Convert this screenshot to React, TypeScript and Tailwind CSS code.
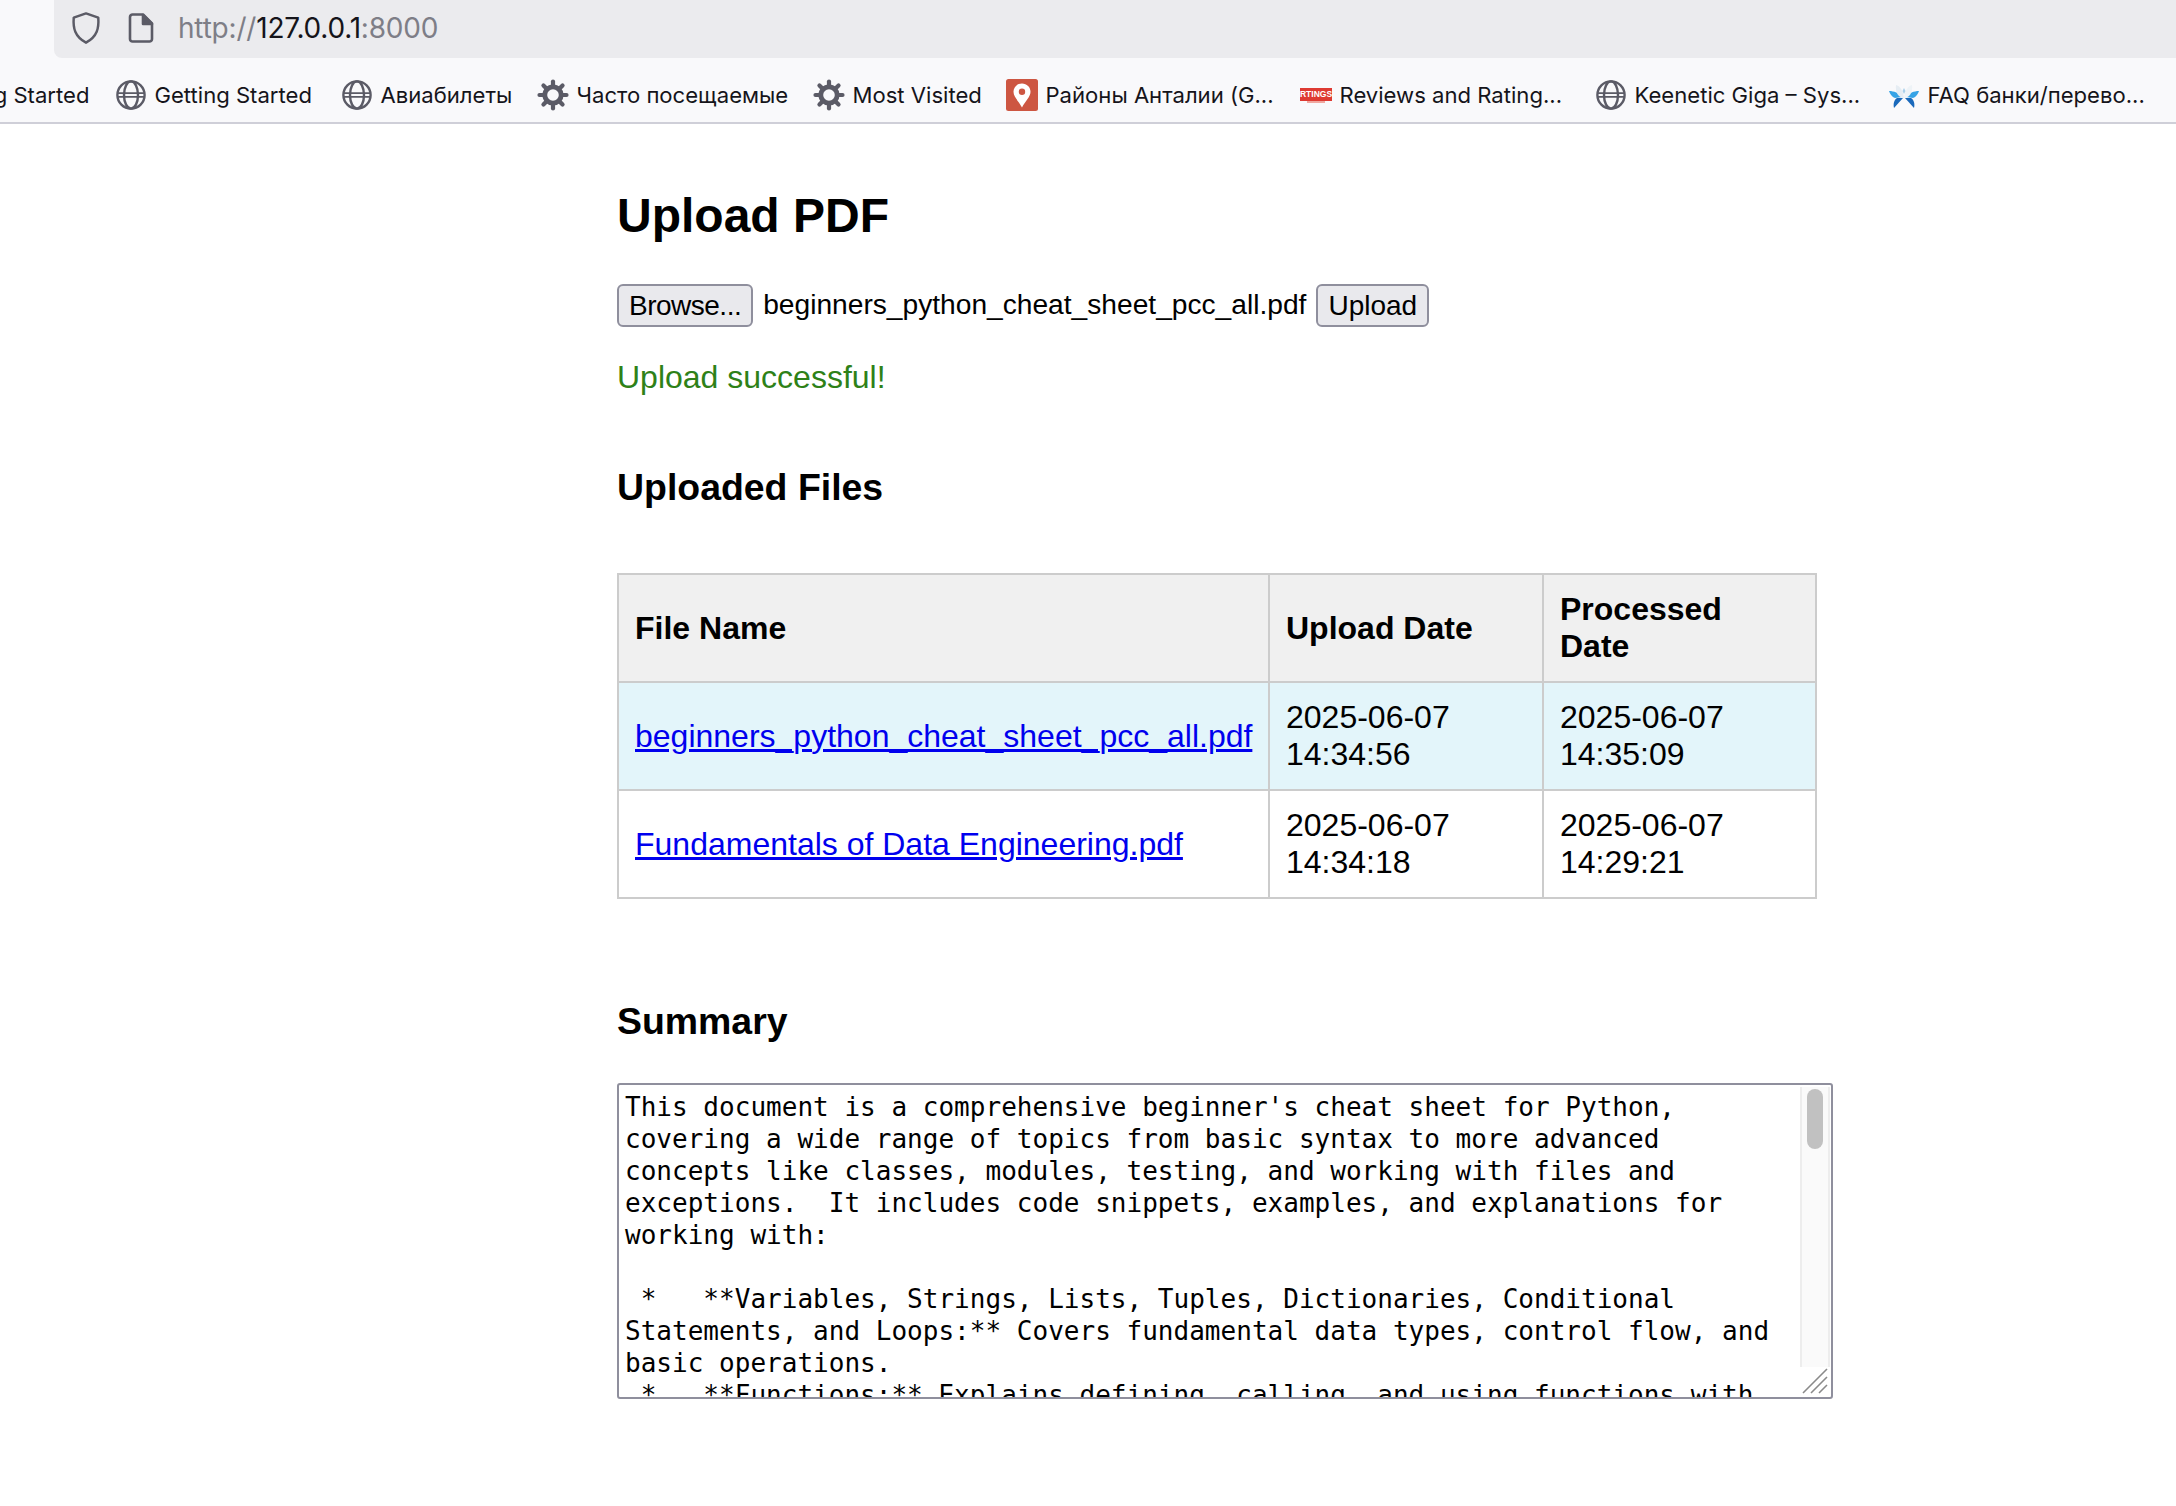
const summaryLines = [
  "This document is a comprehensive beginner's cheat sheet for Python,",
  'covering a wide range of topics from basic syntax to more advanced',
  'concepts like classes, modules, testing, and working with files and',
  'exceptions.  It includes code snippets, examples, and explanations for',
  'working with:',
  ' ',
  ' *   **Variables, Strings, Lists, Tuples, Dictionaries, Conditional',
  'Statements, and Loops:** Covers fundamental data types, control flow, and',
  'basic operations.',
  ' *   **Functions:** Explains defining, calling, and using functions with',
];

const files = [
  {
    name: 'beginners_python_cheat_sheet_pcc_all.pdf',
    uploaded: ['2025-06-07', '14:34:56'],
    processed: ['2025-06-07', '14:35:09'],
    active: true,
  },
  {
    name: 'Fundamentals of Data Engineering.pdf',
    uploaded: ['2025-06-07', '14:34:18'],
    processed: ['2025-06-07', '14:29:21'],
    active: false,
  },
];

function GlobeIcon() {
  return (
    <svg viewBox="0 0 32 32" className="h-[32px] w-[32px] shrink-0" fill="none" stroke="#5b5b66" strokeWidth="2.4">
      <circle cx="16" cy="16" r="13.6" />
      <ellipse cx="16" cy="16" rx="7" ry="13.6" />
      <path d="M3 14.200h26M3 17.800h26" strokeWidth="1.8" />
    </svg>
  );
}

function GearIcon() {
  const teeth = [0, 45, 90, 135, 180, 225, 270, 315];
  return (
    <svg viewBox="0 0 32 32" className="h-[32px] w-[32px] shrink-0" fill="none" stroke="#5b5b66">
      <circle cx="16" cy="16" r="8.2" strokeWidth="4.8" />
      {teeth.map((deg) => (
        <path key={deg} d="M16 2.500v5" strokeWidth="4.2" strokeLinecap="round" transform={`rotate(${deg} 16 16)`} />
      ))}
    </svg>
  );
}

function MapIcon() {
  return (
    <svg viewBox="0 0 32 32" className="h-[32px] w-[32px] shrink-0">
      <rect width="32" height="32" rx="2.500" fill="#cd5642" />
      <path d="M16 4.500c-4.800 0-8.500 3.600-8.500 8.300 0 5.200 5.500 9.700 8.500 15.700 3-6 8.500-10.500 8.500-15.700 0-4.700-3.700-8.300-8.500-8.300z" fill="#fff" />
      <circle cx="16" cy="12.800" r="3.200" fill="#cd5642" />
    </svg>
  );
}

function RtingsIcon() {
  return (
    <div className="flex h-[32px] w-[32px] shrink-0 flex-col items-center justify-center">
      <div className="flex h-[13px] w-[32px] items-center justify-center bg-[#de3a32] font-['Liberation_Sans',sans-serif] text-[8.5px] leading-none font-bold text-white">
        RTINGS
      </div>
      <div className="h-[2px] w-[18px] bg-[#f0a8a0]" />
    </div>
  );
}

function FaqIcon() {
  return (
    <svg viewBox="0 0 32 32" className="h-[32px] w-[32px] shrink-0">
      <path d="M1 12c5 0 10 2 13 6l-7 1c-3-1-5-4-6-7z" fill="#36a3e6" />
      <path d="M31 12c-5 0-10 2-13 6l7 1c3-1 5-4 6-7z" fill="#36a3e6" />
      <path d="M15 19c-3 3-6 7-9 10-1-4 0-8 3-10z" fill="#1a69bb" />
      <path d="M17 19c3 3 6 7 9 10 1-4 0-8-3-10z" fill="#1a69bb" />
      <path d="M8 6c4 1 7 5 8 13-5 0-9-5-8-13z" fill="#e6edf3" />
      <path d="M24 6c-4 1-7 5-8 13 5 0 9-5 8-13z" fill="#eef3f7" />
      <path d="M16 9l-1.500 3 1.500 3 1.500-3z" fill="#a9cfea" />
    </svg>
  );
}

const bookmarks = [
  { label: 'Getting Started', icon: <GlobeIcon />, width: 'w-[226px]' },
  { label: 'Авиабилеты', icon: <GlobeIcon />, width: 'w-[196px]' },
  { label: 'Часто посещаемые', icon: <GearIcon />, width: 'w-[276px]' },
  { label: 'Most Visited', icon: <GearIcon />, width: 'w-[193px]' },
  { label: 'Районы Анталии (G...', icon: <MapIcon />, width: 'w-[294px]' },
  { label: 'Reviews and Rating...', icon: <RtingsIcon />, width: 'w-[295px]' },
  { label: 'Keenetic Giga – Sys...', icon: <GlobeIcon />, width: 'w-[293px]' },
  { label: 'FAQ банки/перево...', icon: <FaqIcon />, width: 'w-[260px]' },
];

function BrowserChrome() {
  return (
    <div className="h-[124px] overflow-hidden border-b-2 border-[#cfcfd8] bg-[#f9f9fb] font-['Inter',sans-serif]">
      <div className="ml-[54px] flex h-[58px] items-center rounded-bl-[8px] bg-[#ebebee] pb-[2px]">
        <svg viewBox="0 0 32 36" className="ml-[16px] h-[34px] w-[32px]" fill="none" stroke="#5b5b66" strokeWidth="2.6" strokeLinejoin="round">
          <path d="M16 2.500l13 4.500c.8 11-1 20-13 26.500C4 27 2.200 18 3 7z" />
        </svg>
        <svg viewBox="0 0 26 30" className="ml-[26px] h-[30px] w-[26px]" fill="none" stroke="#5b5b66" strokeWidth="2.6" strokeLinejoin="round">
          <path d="M2 4a2.500 2.500 0 0 1 2.500-2.500H15L24 10.500V26a2.500 2.500 0 0 1-2.500 2.500h-17A2.500 2.500 0 0 1 2 26z" />
          <path d="M15 2l9 9h-9z" fill="#5b5b66" />
        </svg>
        <div className="ml-[24px] text-[28px] tracking-[-0.2px] text-[#7e7e87]">
          http://<span className="text-[#15141a]">127.0.0.1</span>:8000
        </div>
      </div>
      <div className="flex h-[64px] items-center pt-[11px] text-[22.1px] whitespace-nowrap text-[#15141a]">
        <div className="ml-[-107px] flex w-[222px] shrink-0 items-center gap-[7px]">
          <GlobeIcon />
          <span>Getting Started</span>
        </div>
        {bookmarks.map((b) => (
          <div key={b.label} className={`flex shrink-0 items-center gap-[7.5px] ${b.width}`}>
            {b.icon}
            <span>{b.label}</span>
          </div>
        ))}
      </div>
    </div>
  );
}

function UploadBar() {
  const btn =
    'rounded-[6px] border-2 border-[#8f8f9d] bg-[#e9e9ed] h-[43px] px-[10px] text-[28px] leading-none text-black';
  return (
    <div className="mt-[41px] flex items-center text-[28px] text-black">
      <button className={`${btn} tracking-[-0.5px]`}>Browse...</button>
      <span className="ml-[10px] text-[28.16px]">beginners_python_cheat_sheet_pcc_all.pdf</span>
      <button className={`ml-[10px] ${btn}`}>Upload</button>
    </div>
  );
}

function FilesTable() {
  const th = 'border-2 border-[#cccccc] bg-[#f0f0f0] px-[16px] py-[16px] text-left align-middle leading-[37px] font-bold';
  const td = 'border-2 border-[#cccccc] px-[16px] py-[16px] align-middle leading-[37px]';
  return (
    <table className="mt-[64px] w-[1198px] table-fixed border-collapse text-[32px] text-black">
      <thead>
        <tr>
          <th className={`${th} w-[651px]`}>File Name</th>
          <th className={`${th} w-[274px]`}>Upload Date</th>
          <th className={`${th} w-[273px]`}>Processed Date</th>
        </tr>
      </thead>
      <tbody>
        {files.map((f) => (
          <tr key={f.name} className={f.active ? 'bg-[#e3f5fa]' : 'bg-white'}>
            <td className={`${td} whitespace-nowrap`}>
              <a href="#" className="text-[#0000ee] underline">
                {f.name}
              </a>
            </td>
            <td className={td}>
              {f.uploaded[0]}
              <br />
              {f.uploaded[1]}
            </td>
            <td className={td}>
              {f.processed[0]}
              <br />
              {f.processed[1]}
            </td>
          </tr>
        ))}
      </tbody>
    </table>
  );
}

function SummaryBox() {
  return (
    <div className="relative mt-[40px] h-[316px] w-[1216px] overflow-hidden rounded-[3px] border-2 border-[#8f8f9d] bg-white">
      <div className="h-full overflow-hidden pt-[6px] pl-[6px] font-['DejaVu_Sans_Mono',monospace] text-[26.04px] leading-[32px] whitespace-pre text-black">
        {summaryLines.map((line, i) => (
          <div key={i}>{line}</div>
        ))}
      </div>
      {/* scrollbar + resizer sit over the text */}
      <div className="absolute top-[2px] right-[1px] h-[280px] w-[30px] border-x-2 border-[#ededed] bg-[#fafafa]">
        <div className="mx-auto mt-[2px] h-[60px] w-[16px] rounded-full bg-[#c1c1c1]" />
      </div>
      <svg viewBox="0 0 26 26" className="absolute right-[3px] bottom-[3px] h-[26px] w-[26px]" stroke="#8a8a8a" strokeWidth="1.6">
        <path d="M1 25L25 1M9 25L25 9M17 25l8-8" />
      </svg>
    </div>
  );
}

export default function App() {
  return (
    <div className="min-h-[1506px] bg-white font-['Liberation_Sans',Arial,sans-serif]">
      <BrowserChrome />
      <div className="ml-[617px] w-[1240px]">
        <h1 className="mt-[64px] text-[48px] leading-[55px] font-bold text-black">Upload PDF</h1>
        <UploadBar />
        <p className="mt-[32px] text-[32px] leading-[37px] text-[#2e8118]">Upload successful!</p>
        <h2 className="mt-[69px] text-[37.44px] leading-[44px] font-bold text-black">Uploaded Files</h2>
        <FilesTable />
        <h2 className="mt-[100px] text-[37.44px] leading-[44px] font-bold text-black">Summary</h2>
        <SummaryBox />
      </div>
    </div>
  );
}
